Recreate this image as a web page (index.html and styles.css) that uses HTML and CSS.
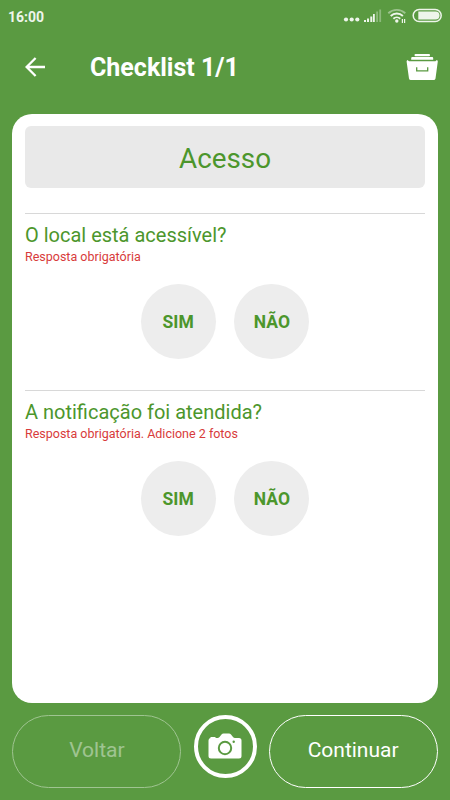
FILE: index.html
```html
<!DOCTYPE html>
<html lang="pt-BR">
<head>
    <meta charset="UTF-8">
    <meta name="viewport" content="width=device-width, initial-scale=1.0">
    <title>Checklist</title>
    <link rel="stylesheet" href="styles.css">
</head>
<body>
    <div class="status-bar">
        <span class="clock">16:00</span>
        <svg class="status-icons" width="102" height="20" viewBox="0 0 102 20">
            <g fill="#eef5eb">
                <circle cx="6" cy="12.5" r="2.1"/>
                <circle cx="11.7" cy="12.5" r="2.1"/>
                <circle cx="17.3" cy="12.5" r="2.1"/>
                <path d="M24 13h2v2h-2zM27 11.5h2V15h-2zM30.3 9.5h2V15h-2z"/>
                <path d="M33 7h1.8v8H33z"/>
                <path d="M36.2 4.5H38V15h-1.8zM39.3 2.5h1.8V15h-1.8z" opacity=".35"/>
            </g>
            <g fill="none" stroke="#eef5eb" stroke-width="1.9">
                <path d="M48.3 6.2a12.5 12.5 0 0 1 17 0" opacity=".45"/>
                <path d="M50.7 9a8.8 8.8 0 0 1 12.2 0"/>
                <path d="M53.4 11.7a5 5 0 0 1 6.8 0"/>
                <path d="M62.4 12v4M64.6 12v4" stroke-width="1.2"/>
            </g>
            <circle cx="56.8" cy="14" r="1.7" fill="#eef5eb"/>
            <rect x="73.2" y="2.5" width="28" height="12" rx="6" fill="none" stroke="#eef5eb" stroke-width="1.5"/>
            <path d="M78.3 4.5H95.500a4 4 0 0 1 0 8H78.3z" fill="#eef5eb"/>
        </svg>
    </div>

    <div class="header">
        <svg class="back" width="20" height="20" viewBox="0 0 20 20">
            <path d="M20 10H2M10.6 1L1.6 10l9 9" fill="none" stroke="#fff" stroke-width="2.3"/>
        </svg>
        <h1>Checklist 1/1</h1>
        <svg class="drawer" width="32" height="27" viewBox="0 0 32 27">
            <g fill="#fff">
                <rect x="8.5" y="0" width="15.5" height="2.2" rx="1"/>
                <path d="M6.200 3h20q1 0 1 1.200v1.500h-22V4.200q0-1.200 1-1.200z"/>
                <path d="M1.5 6l1.500 1.200h26.400l1.500-1.200q1 .5.9 1.500L29.500 24.500q-.3 1.500-1.800 1.500H4.800Q3.300 26 3 24.500L.6 7.500q0-1 .9-1.500z"/>
            </g>
            <path d="M10.700 13.300v3.500h11v-3.500" fill="none" stroke="#5a9a41" stroke-width="1.300"/>
        </svg>
    </div>

    <div class="card">
        <div class="section-title">Acesso</div>

        <div class="question">
            <h2>O local está acessível?</h2>
            <p class="hint">Resposta obrigatória</p>
            <div class="answers">
                <button class="answer">SIM</button>
                <button class="answer">NÃO</button>
            </div>
        </div>

        <div class="question">
            <h2>A notificação foi atendida?</h2>
            <p class="hint">Resposta obrigatória. Adicione 2 fotos</p>
            <div class="answers">
                <button class="answer">SIM</button>
                <button class="answer">NÃO</button>
            </div>
        </div>
    </div>

    <div class="footer">
        <button class="nav-btn disabled">Voltar</button>
        <button class="camera-btn">
            <svg width="34" height="26" viewBox="0 0 34 26">
                <path d="M2.5 5V4h5v1h2q1.200 0 2-1l2-2.500q.8-1 2-1h5.500q1.200 0 2 1l2 2.500q.8 1 2 1H31q2.500 0 2.500 2.500V23q0 2.500-2.500 2.500H3Q.5 25.500.5 23V7.500Q.5 5 2.500 5z" fill="#fff"/>
                <circle cx="17" cy="15" r="6.200" fill="none" stroke="#5a9a41" stroke-width="2"/>
                <circle cx="25.700" cy="8.800" r="1.200" fill="#5a9a41"/>
            </svg>
        </button>
        <button class="nav-btn">Continuar</button>
    </div>
</body>
</html>
```
FILE: styles.css
```css
:root {
    --green: #5a9a41;
    --text-green: #4c962c;
    --red: #d83b3b;
}

* {
    box-sizing: border-box;
}

body {
    margin: 0;
    height: 800px;
    display: flex;
    flex-direction: column;
    overflow: hidden;
    background-color: var(--green);
    font-family: Roboto, "Liberation Sans", sans-serif;
}

button {
    padding: 0;
    border: none;
    background: none;
    font-family: inherit;
    cursor: pointer;
}

.status-bar {
    height: 32px;
    padding: 7px 8px 0;
    display: flex;
    justify-content: space-between;
}

.clock {
    padding-top: 1px;
    color: #eef5eb;
    font-size: 14px;
    font-weight: 700;
    line-height: 18px;
}

.status-icons {
    overflow: visible;
}

.header {
    height: 81.5px;
    padding: 0 12px 11px 25px;
    display: flex;
    align-items: center;
}

.header h1 {
    flex: 1;
    margin: 2px 0 0 45px;
    color: #fff;
    font-size: 25px;
    font-weight: 700;
    line-height: 30px;
}

.card {
    height: 589px;
    margin: 0 12.4px;
    padding: 12.6px;
    background-color: #fff;
    border-radius: 20px;
}

.section-title {
    height: 62px;
    margin-bottom: 25px;
    background-color: #e9e9e9;
    border-radius: 6px;
    color: var(--text-green);
    font-size: 27.8px;
    line-height: 65px;
    text-align: center;
}

.question {
    height: 177px;
    padding-top: 9px;
    border-top: 1px solid #d8d8d8;
}

.question h2 {
    margin: 0;
    color: var(--text-green);
    font-size: 20px;
    font-weight: 400;
    line-height: 25px;
}

.hint {
    margin: 0;
    color: var(--red);
    font-size: 12.5px;
    line-height: 18px;
}

.answers {
    margin-top: 17.6px;
    display: flex;
    justify-content: center;
    gap: 18.8px;
}

.answer {
    width: 75px;
    height: 75px;
    padding-top: 1px;
    border-radius: 50%;
    background-color: #ededed;
    color: var(--text-green);
    font-size: 17.5px;
    font-weight: 700;
}

.footer {
    margin-top: 12px;
    padding: 0 12.4px;
    display: flex;
    justify-content: space-between;
}

.nav-btn {
    width: 169px;
    height: 73px;
    padding-bottom: 2px;
    border: 1.5px solid #fff;
    border-radius: 37px;
    color: #fff;
    font-size: 21px;
}

.nav-btn.disabled {
    opacity: 0.42;
}

.camera-btn {
    width: 63px;
    height: 63px;
    border: 4px solid #fff;
    border-radius: 50%;
    display: flex;
    align-items: center;
    justify-content: center;
}
```
